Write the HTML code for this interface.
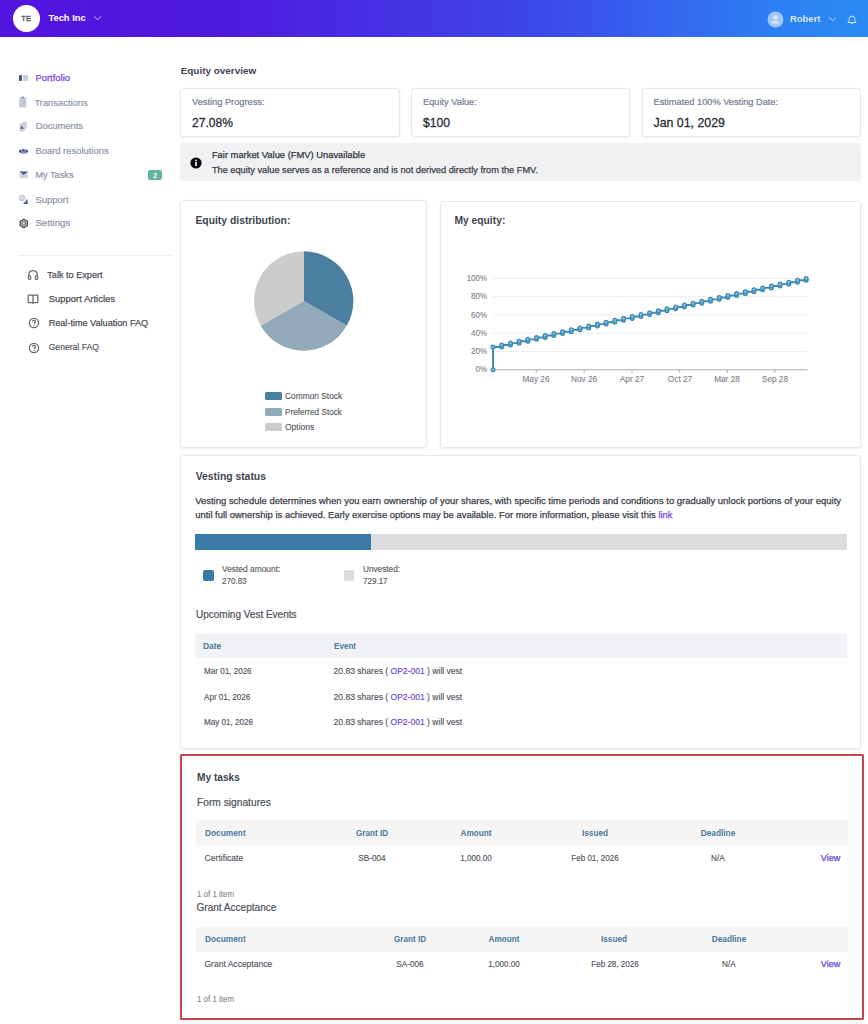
<!DOCTYPE html>
<html><head><meta charset="utf-8"><title>Portfolio</title>
<style>
html,body{margin:0;padding:0;}
body{width:868px;height:1024px;overflow:hidden;position:relative;background:#ffffff;font-family:"Liberation Sans", sans-serif;}
.t{position:absolute;white-space:nowrap;line-height:1;font-family:"Liberation Sans", sans-serif;}
</style></head><body>
<div style="position:absolute;left:0px;top:0px;width:868px;height:37px;background:linear-gradient(90deg,#5214DF 0%,#4F19E0 25%,#3E45E8 60%,#2C80F3 90%,#2A8BF5 100%);"></div>
<div style="position:absolute;left:13px;top:5px;width:26.5px;height:26.5px;background:#fff;border-radius:50%;"></div>
<div class="t" style="left:11.20px;width:30px;text-align:center;top:15.00px;font-size:7.6px;color:#55555f;font-weight:400;-webkit-text-stroke:0.35px #55555f;">TE</div>
<div class="t" style="left:48.40px;top:13.00px;font-size:9.4px;color:#ffffff;font-weight:700;">Tech Inc</div>
<svg style="position:absolute;left:93px;top:15px" width="10" height="7" viewBox="0 0 10 7"><polyline points="1.2,1.3 4.6,4.8 8,1.3" fill="none" stroke="rgba(255,255,255,0.75)" stroke-width="1"/></svg>
<svg style="position:absolute;left:767px;top:10.5px" width="17" height="17" viewBox="0 0 17 17"><circle cx="8.5" cy="8.5" r="8" fill="rgba(255,255,255,0.55)"/><circle cx="8.5" cy="6.4" r="2.3" fill="rgba(255,255,255,0.6)"/><path d="M4.2,12.6 C4.9,10.4 6.6,9.6 8.5,9.6 C10.4,9.6 12.1,10.4 12.8,12.6 Z" fill="rgba(255,255,255,0.6)"/></svg>
<div class="t" style="left:789.90px;top:14.00px;font-size:9.5px;color:rgba(255,255,255,0.82);font-weight:700;">Robert</div>
<svg style="position:absolute;left:827.5px;top:15.5px" width="10" height="7" viewBox="0 0 10 7"><polyline points="1.2,1.3 4.6,4.8 8,1.3" fill="none" stroke="rgba(255,255,255,0.7)" stroke-width="1"/></svg>
<svg style="position:absolute;left:846px;top:13.5px" width="12" height="12" viewBox="0 0 12 12"><path d="M1.9,8.5 C2.9,7.7 3.2,6.7 3.2,5.2 C3.2,3.3 4.4,2.1 6,2.1 C7.6,2.1 8.8,3.3 8.8,5.2 C8.8,6.7 9.1,7.7 10.1,8.5 Z" fill="none" stroke="rgba(255,255,255,0.82)" stroke-width="0.95" stroke-linejoin="round"/><path d="M5,9.3 C5.3,10.1 6.7,10.1 7,9.3" fill="none" stroke="rgba(255,255,255,0.82)" stroke-width="0.9"/></svg>
<div class="t" style="left:35.40px;top:73.00px;font-size:9.46px;color:#7b45e6;font-weight:400;-webkit-text-stroke:0.25px #7b45e6;">Portfolio</div>
<div class="t" style="left:34.40px;top:98.00px;font-size:9.39px;color:#8a92a8;font-weight:400;-webkit-text-stroke:0.18px #8a92a8;">Transactions</div>
<div class="t" style="left:35.70px;top:122.00px;font-size:9.37px;color:#8a92a8;font-weight:400;-webkit-text-stroke:0.18px #8a92a8;">Documents</div>
<div class="t" style="left:35.40px;top:146.00px;font-size:9.41px;color:#8a92a8;font-weight:400;-webkit-text-stroke:0.18px #8a92a8;">Board resolutions</div>
<div class="t" style="left:35.40px;top:171.00px;font-size:9.2px;color:#8a92a8;font-weight:400;-webkit-text-stroke:0.18px #8a92a8;">My Tasks</div>
<div class="t" style="left:35.40px;top:195.00px;font-size:9.48px;color:#8a92a8;font-weight:400;-webkit-text-stroke:0.18px #8a92a8;">Support</div>
<div class="t" style="left:35.40px;top:218.00px;font-size:9.66px;color:#8a92a8;font-weight:400;-webkit-text-stroke:0.18px #8a92a8;">Settings</div>
<div style="position:absolute;left:19px;top:75px;width:2.6000000000000014px;height:6px;background:#41548a;border-radius:1px;"></div>
<div style="position:absolute;left:22.6px;top:75px;width:5.0px;height:6px;background:#c9cedb;border-radius:0.5px;"></div>
<svg style="position:absolute;left:18px;top:96px" width="10" height="12" viewBox="0 0 10 12"><rect x="1" y="1.5" width="7.6" height="10" rx="0.8" fill="#c9cedb"/><rect x="3.3" y="0.6" width="3" height="1.8" rx="0.5" fill="#8e97ad"/><path d="M2.6,5 h4.4 M2.6,7 h4.4 M2.6,9 h3" stroke="#aab2c4" stroke-width="0.6"/></svg>
<svg style="position:absolute;left:18px;top:121px" width="10" height="11" viewBox="0 0 10 11"><rect x="4" y="0.6" width="5" height="7.4" rx="1.2" fill="#d3d7e2"/><rect x="1.6" y="2.6" width="5.2" height="7.6" rx="1" fill="#c9cedb"/><path d="M2.6,5.2 L4.6,5.6 L5.6,8 L2.6,8 Z" fill="#5a6a98"/></svg>
<svg style="position:absolute;left:18px;top:147px" width="11" height="9" viewBox="0 0 11 9"><path d="M1,4.6 C2,7.8 9,7.8 10,4.6 Z" fill="#8e9bbb"/><circle cx="2.4" cy="3.9" r="1.5" fill="#4a5a88"/><circle cx="5.5" cy="3.2" r="1.5" fill="#4a5a88"/><circle cx="8.6" cy="3.9" r="1.5" fill="#4a5a88"/></svg>
<svg style="position:absolute;left:18.5px;top:170px" width="10" height="9" viewBox="0 0 10 9"><rect x="0.6" y="1.6" width="8.2" height="6.4" rx="0.6" fill="#cdd2de"/><path d="M0.6,1.6 L4.7,5 L8.8,1.6 Z" fill="#4a5c8c"/></svg>
<svg style="position:absolute;left:18px;top:193px" width="11" height="11" viewBox="0 0 11 11"><circle cx="4" cy="4.9" r="3.3" fill="#c9cedb"/><circle cx="4.2" cy="4.6" r="1.6" fill="#d8dce6"/><path d="M8.6,5.8 C9.8,6.6 9.9,9.8 9.8,10.9 L5.6,10.9 C5.2,10.6 5.4,10.2 6,9.8 C7.6,8.8 8.4,7.4 8.6,5.8 Z" fill="#4a5c8c"/></svg>
<svg style="position:absolute;left:18.5px;top:218px" width="10" height="11" viewBox="0 0 10 11"><polygon points="4.8,1.2 8.4,3.3 8.4,7.5 4.8,9.6 1.2,7.5 1.2,3.3" fill="#d8d8dc" stroke="#4a4a52" stroke-width="1.3" stroke-linejoin="round"/><polygon points="4.8,3.4 6.6,4.4 6.6,6.4 4.8,7.4 3,6.4 3,4.4" fill="none" stroke="#4a4a52" stroke-width="0.9"/></svg>
<div style="position:absolute;left:148px;top:170px;width:14px;height:10px;background:#5fb3a0;border-radius:2px;"></div>
<div class="t" style="left:148.00px;width:14px;text-align:center;top:172.00px;font-size:7.5px;color:#ffffff;font-weight:700;">2</div>
<div style="position:absolute;left:19px;top:255px;width:153px;height:1px;background:#eceef1;"></div>
<div class="t" style="left:47.30px;top:271.00px;font-size:9.14px;color:#4f5058;font-weight:400;-webkit-text-stroke:0.25px #4f5058;">Talk to Expert</div>
<div class="t" style="left:48.70px;top:294.00px;font-size:9.48px;color:#4f5058;font-weight:400;-webkit-text-stroke:0.25px #4f5058;">Support Articles</div>
<div class="t" style="left:48.70px;top:319.00px;font-size:9.11px;color:#4f5058;font-weight:400;-webkit-text-stroke:0.25px #4f5058;">Real-time Valuation FAQ</div>
<div class="t" style="left:48.70px;top:343.00px;font-size:8.6px;color:#4f5058;font-weight:400;-webkit-text-stroke:0.15px #4f5058;">General FAQ</div>
<svg style="position:absolute;left:27px;top:269px" width="12" height="12" viewBox="0 0 12 12"><path d="M1.8,8 L1.8,6 C1.8,3.4 3.6,1.6 6,1.6 C8.4,1.6 10.2,3.4 10.2,6 L10.2,8" fill="none" stroke="#6a6b71" stroke-width="1.3"/><rect x="1.3" y="6.8" width="2.4" height="3.6" rx="1" fill="none" stroke="#6a6b71" stroke-width="1.2"/><rect x="8.3" y="6.8" width="2.4" height="3.6" rx="1" fill="none" stroke="#6a6b71" stroke-width="1.2"/></svg>
<svg style="position:absolute;left:27px;top:293px" width="12" height="12" viewBox="0 0 12 12"><path d="M1.2,2 L5.4,2 C5.8,2 6,2.3 6,2.6 L6,10.4 C6,10 5.7,9.6 5.2,9.6 L1.2,9.6 Z M10.8,2 L6.6,2 C6.2,2 6,2.3 6,2.6 L6,10.4 C6,10 6.3,9.6 6.8,9.6 L10.8,9.6 Z" fill="none" stroke="#6a6b71" stroke-width="1.25" stroke-linejoin="round"/></svg>
<svg style="position:absolute;left:27.5px;top:317px" width="12" height="12" viewBox="0 0 12 12"><circle cx="6" cy="6" r="4.6" fill="none" stroke="#6a6b71" stroke-width="1.3"/><path d="M4.5,4.8 C4.5,3.9 5.2,3.4 6,3.4 C6.8,3.4 7.5,3.9 7.5,4.7 C7.5,5.6 6.1,5.8 6.1,6.9" fill="none" stroke="#6a6b71" stroke-width="1.2"/><circle cx="6.1" cy="8.4" r="0.55" fill="#6a6b71"/></svg>
<svg style="position:absolute;left:27.5px;top:341.5px" width="12" height="12" viewBox="0 0 12 12"><circle cx="6" cy="6" r="4.6" fill="none" stroke="#6a6b71" stroke-width="1.3"/><path d="M4.5,4.8 C4.5,3.9 5.2,3.4 6,3.4 C6.8,3.4 7.5,3.9 7.5,4.7 C7.5,5.6 6.1,5.8 6.1,6.9" fill="none" stroke="#6a6b71" stroke-width="1.2"/><circle cx="6.1" cy="8.4" r="0.55" fill="#6a6b71"/></svg>
<div class="t" style="left:180.70px;top:66.00px;font-size:9.94px;color:#41454f;font-weight:700;">Equity overview</div>
<div style="position:absolute;left:180px;top:88px;width:219.5px;height:48.5px;background:#fff;border:1px solid #e6e8ec;border-radius:3px;box-shadow:0 1px 3px rgba(30,40,60,0.07);box-sizing:border-box;"></div>
<div class="t" style="left:192.00px;top:98.00px;font-size:9.26px;color:#737b94;font-weight:400;-webkit-text-stroke:0.2px #737b94;">Vesting Progress:</div>
<div class="t" style="left:192.00px;top:117.00px;font-size:12.06px;color:#2a2f3b;font-weight:400;-webkit-text-stroke:0.3px #2a2f3b;">27.08%</div>
<div style="position:absolute;left:411px;top:88px;width:219px;height:48.5px;background:#fff;border:1px solid #e6e8ec;border-radius:3px;box-shadow:0 1px 3px rgba(30,40,60,0.07);box-sizing:border-box;"></div>
<div class="t" style="left:423.00px;top:98.00px;font-size:9.26px;color:#737b94;font-weight:400;-webkit-text-stroke:0.2px #737b94;">Equity Value:</div>
<div class="t" style="left:423.00px;top:117.00px;font-size:12.2px;color:#2a2f3b;font-weight:400;-webkit-text-stroke:0.3px #2a2f3b;">$100</div>
<div style="position:absolute;left:641.5px;top:88px;width:219.5px;height:48.5px;background:#fff;border:1px solid #e6e8ec;border-radius:3px;box-shadow:0 1px 3px rgba(30,40,60,0.07);box-sizing:border-box;"></div>
<div class="t" style="left:653.50px;top:98.00px;font-size:9.22px;color:#737b94;font-weight:400;-webkit-text-stroke:0.2px #737b94;">Estimated 100% Vesting Date:</div>
<div class="t" style="left:653.50px;top:117.00px;font-size:12.36px;color:#2a2f3b;font-weight:400;-webkit-text-stroke:0.3px #2a2f3b;">Jan 01, 2029</div>
<div style="position:absolute;left:180px;top:143.3px;width:681px;height:37.69999999999999px;background:#f0f1f3;border-radius:3px;"></div>
<svg style="position:absolute;left:190px;top:157px" width="12" height="12" viewBox="0 0 12 12"><circle cx="6" cy="6" r="5.6" fill="#0b0b0f"/><rect x="5.2" y="4.8" width="1.6" height="4.2" fill="#fff"/><circle cx="6" cy="3.3" r="0.85" fill="#fff"/></svg>
<div class="t" style="left:211.90px;top:151.00px;font-size:9.37px;color:#333640;font-weight:400;-webkit-text-stroke:0.25px #333640;">Fair market Value (FMV) Unavailable</div>
<div class="t" style="left:211.90px;top:166.00px;font-size:9.22px;color:#3d404a;font-weight:400;-webkit-text-stroke:0.25px #3d404a;">The equity value serves as a reference and is not derived directly from the FMV.</div>
<div style="position:absolute;left:179.6px;top:200.3px;width:247.9px;height:247.7px;background:#fff;border:1px solid #e6e8ec;border-radius:3px;box-shadow:0 1px 3px rgba(30,40,60,0.07);box-sizing:border-box;"></div>
<div class="t" style="left:195.40px;top:216.00px;font-size:10.36px;color:#41454f;font-weight:700;">Equity distribution:</div>
<svg style="position:absolute;left:0;top:0" width="868" height="1024"><path d="M303.7,301 L303.70,251.30 A49.7,49.7 0 0,1 346.74,325.85 Z" fill="#4a7fa1"/><path d="M303.7,301 L346.74,325.85 A49.7,49.7 0 0,1 260.66,325.85 Z" fill="#91a9b8"/><path d="M303.7,301 L260.66,325.85 A49.7,49.7 0 0,1 303.70,251.30 Z" fill="#cccccc"/></svg>
<div style="position:absolute;left:265px;top:391.6px;width:16.5px;height:8.399999999999977px;background:#4a7fa1;border-radius:1.5px;"></div>
<div class="t" style="left:285.00px;top:392.00px;font-size:8.5px;color:#5a5c64;font-weight:400;-webkit-text-stroke:0.15px #5a5c64;transform:scaleX(0.9847);transform-origin:0 0;">Common Stock</div>
<div style="position:absolute;left:265px;top:407.5px;width:16.5px;height:8.399999999999977px;background:#8fa9bd;border-radius:1.5px;"></div>
<div class="t" style="left:285.00px;top:408.00px;font-size:8.5px;color:#5a5c64;font-weight:400;-webkit-text-stroke:0.15px #5a5c64;transform:scaleX(0.9647);transform-origin:0 0;">Preferred Stock</div>
<div style="position:absolute;left:265px;top:423.1px;width:16.5px;height:8.399999999999977px;background:#cccccc;border-radius:1.5px;"></div>
<div class="t" style="left:285.00px;top:423.00px;font-size:8.5px;color:#5a5c64;font-weight:400;-webkit-text-stroke:0.15px #5a5c64;">Options</div>
<div style="position:absolute;left:439.5px;top:200.5px;width:421.5px;height:247.5px;background:#fff;border:1px solid #e6e8ec;border-radius:3px;box-shadow:0 1px 3px rgba(30,40,60,0.07);box-sizing:border-box;"></div>
<div class="t" style="left:454.40px;top:216.00px;font-size:10.31px;color:#41454f;font-weight:700;">My equity:</div>
<svg style="position:absolute;left:0;top:0" width="868" height="1024"><line x1="493" y1="351.52" x2="807.5" y2="351.52" stroke="#e9edf2" stroke-width="1"/><line x1="493" y1="333.24" x2="807.5" y2="333.24" stroke="#e9edf2" stroke-width="1"/><line x1="493" y1="314.96" x2="807.5" y2="314.96" stroke="#e9edf2" stroke-width="1"/><line x1="493" y1="296.68" x2="807.5" y2="296.68" stroke="#e9edf2" stroke-width="1"/><line x1="493" y1="278.40" x2="807.5" y2="278.40" stroke="#e9edf2" stroke-width="1"/><line x1="493" y1="369.8" x2="807.5" y2="369.8" stroke="#a9abb2" stroke-width="1"/><line x1="536.3" y1="369.8" x2="536.3" y2="372.8" stroke="#a9abb2" stroke-width="1"/><line x1="584.2" y1="369.8" x2="584.2" y2="372.8" stroke="#a9abb2" stroke-width="1"/><line x1="632" y1="369.8" x2="632" y2="372.8" stroke="#a9abb2" stroke-width="1"/><line x1="679.7" y1="369.8" x2="679.7" y2="372.8" stroke="#a9abb2" stroke-width="1"/><line x1="727.4" y1="369.8" x2="727.4" y2="372.8" stroke="#a9abb2" stroke-width="1"/><line x1="774.8" y1="369.8" x2="774.8" y2="372.8" stroke="#a9abb2" stroke-width="1"/><path d="M493.00,369.80 L493.00,346.95 L501.70,346.95 L501.70,345.05 L510.40,345.05 L510.40,343.14 L519.10,343.14 L519.10,341.24 L527.80,341.24 L527.80,339.33 L536.50,339.33 L536.50,337.43 L545.20,337.43 L545.20,335.52 L553.90,335.52 L553.90,333.62 L562.60,333.62 L562.60,331.72 L571.30,331.72 L571.30,329.81 L580.00,329.81 L580.00,327.91 L588.70,327.91 L588.70,326.00 L597.40,326.00 L597.40,324.10 L606.10,324.10 L606.10,322.20 L614.80,322.20 L614.80,320.29 L623.50,320.29 L623.50,318.39 L632.20,318.39 L632.20,316.48 L640.90,316.48 L640.90,314.58 L649.60,314.58 L649.60,312.68 L658.30,312.68 L658.30,310.77 L667.00,310.77 L667.00,308.87 L675.70,308.87 L675.70,306.96 L684.40,306.96 L684.40,305.06 L693.10,305.06 L693.10,303.15 L701.80,303.15 L701.80,301.25 L710.50,301.25 L710.50,299.35 L719.20,299.35 L719.20,297.44 L727.90,297.44 L727.90,295.54 L736.60,295.54 L736.60,293.63 L745.30,293.63 L745.30,291.73 L754.00,291.73 L754.00,289.82 L762.70,289.82 L762.70,287.92 L771.40,287.92 L771.40,286.02 L780.10,286.02 L780.10,284.11 L788.80,284.11 L788.80,282.21 L797.50,282.21 L797.50,280.30 L806.20,280.30 L806.20,278.40" fill="none" stroke="#3b8ab4" stroke-width="1.9"/><circle cx="493.00" cy="369.80" r="1.9" fill="#8dbbd6" stroke="#3b8ab4" stroke-width="1.25"/><circle cx="493.00" cy="346.95" r="1.9" fill="#8dbbd6" stroke="#3b8ab4" stroke-width="1.25"/><circle cx="501.70" cy="346.95" r="1.9" fill="#8dbbd6" stroke="#3b8ab4" stroke-width="1.25"/><circle cx="501.70" cy="345.05" r="1.9" fill="#8dbbd6" stroke="#3b8ab4" stroke-width="1.25"/><circle cx="510.40" cy="345.05" r="1.9" fill="#8dbbd6" stroke="#3b8ab4" stroke-width="1.25"/><circle cx="510.40" cy="343.14" r="1.9" fill="#8dbbd6" stroke="#3b8ab4" stroke-width="1.25"/><circle cx="519.10" cy="343.14" r="1.9" fill="#8dbbd6" stroke="#3b8ab4" stroke-width="1.25"/><circle cx="519.10" cy="341.24" r="1.9" fill="#8dbbd6" stroke="#3b8ab4" stroke-width="1.25"/><circle cx="527.80" cy="341.24" r="1.9" fill="#8dbbd6" stroke="#3b8ab4" stroke-width="1.25"/><circle cx="527.80" cy="339.33" r="1.9" fill="#8dbbd6" stroke="#3b8ab4" stroke-width="1.25"/><circle cx="536.50" cy="339.33" r="1.9" fill="#8dbbd6" stroke="#3b8ab4" stroke-width="1.25"/><circle cx="536.50" cy="337.43" r="1.9" fill="#8dbbd6" stroke="#3b8ab4" stroke-width="1.25"/><circle cx="545.20" cy="337.43" r="1.9" fill="#8dbbd6" stroke="#3b8ab4" stroke-width="1.25"/><circle cx="545.20" cy="335.52" r="1.9" fill="#8dbbd6" stroke="#3b8ab4" stroke-width="1.25"/><circle cx="553.90" cy="335.52" r="1.9" fill="#8dbbd6" stroke="#3b8ab4" stroke-width="1.25"/><circle cx="553.90" cy="333.62" r="1.9" fill="#8dbbd6" stroke="#3b8ab4" stroke-width="1.25"/><circle cx="562.60" cy="333.62" r="1.9" fill="#8dbbd6" stroke="#3b8ab4" stroke-width="1.25"/><circle cx="562.60" cy="331.72" r="1.9" fill="#8dbbd6" stroke="#3b8ab4" stroke-width="1.25"/><circle cx="571.30" cy="331.72" r="1.9" fill="#8dbbd6" stroke="#3b8ab4" stroke-width="1.25"/><circle cx="571.30" cy="329.81" r="1.9" fill="#8dbbd6" stroke="#3b8ab4" stroke-width="1.25"/><circle cx="580.00" cy="329.81" r="1.9" fill="#8dbbd6" stroke="#3b8ab4" stroke-width="1.25"/><circle cx="580.00" cy="327.91" r="1.9" fill="#8dbbd6" stroke="#3b8ab4" stroke-width="1.25"/><circle cx="588.70" cy="327.91" r="1.9" fill="#8dbbd6" stroke="#3b8ab4" stroke-width="1.25"/><circle cx="588.70" cy="326.00" r="1.9" fill="#8dbbd6" stroke="#3b8ab4" stroke-width="1.25"/><circle cx="597.40" cy="326.00" r="1.9" fill="#8dbbd6" stroke="#3b8ab4" stroke-width="1.25"/><circle cx="597.40" cy="324.10" r="1.9" fill="#8dbbd6" stroke="#3b8ab4" stroke-width="1.25"/><circle cx="606.10" cy="324.10" r="1.9" fill="#8dbbd6" stroke="#3b8ab4" stroke-width="1.25"/><circle cx="606.10" cy="322.20" r="1.9" fill="#8dbbd6" stroke="#3b8ab4" stroke-width="1.25"/><circle cx="614.80" cy="322.20" r="1.9" fill="#8dbbd6" stroke="#3b8ab4" stroke-width="1.25"/><circle cx="614.80" cy="320.29" r="1.9" fill="#8dbbd6" stroke="#3b8ab4" stroke-width="1.25"/><circle cx="623.50" cy="320.29" r="1.9" fill="#8dbbd6" stroke="#3b8ab4" stroke-width="1.25"/><circle cx="623.50" cy="318.39" r="1.9" fill="#8dbbd6" stroke="#3b8ab4" stroke-width="1.25"/><circle cx="632.20" cy="318.39" r="1.9" fill="#8dbbd6" stroke="#3b8ab4" stroke-width="1.25"/><circle cx="632.20" cy="316.48" r="1.9" fill="#8dbbd6" stroke="#3b8ab4" stroke-width="1.25"/><circle cx="640.90" cy="316.48" r="1.9" fill="#8dbbd6" stroke="#3b8ab4" stroke-width="1.25"/><circle cx="640.90" cy="314.58" r="1.9" fill="#8dbbd6" stroke="#3b8ab4" stroke-width="1.25"/><circle cx="649.60" cy="314.58" r="1.9" fill="#8dbbd6" stroke="#3b8ab4" stroke-width="1.25"/><circle cx="649.60" cy="312.68" r="1.9" fill="#8dbbd6" stroke="#3b8ab4" stroke-width="1.25"/><circle cx="658.30" cy="312.68" r="1.9" fill="#8dbbd6" stroke="#3b8ab4" stroke-width="1.25"/><circle cx="658.30" cy="310.77" r="1.9" fill="#8dbbd6" stroke="#3b8ab4" stroke-width="1.25"/><circle cx="667.00" cy="310.77" r="1.9" fill="#8dbbd6" stroke="#3b8ab4" stroke-width="1.25"/><circle cx="667.00" cy="308.87" r="1.9" fill="#8dbbd6" stroke="#3b8ab4" stroke-width="1.25"/><circle cx="675.70" cy="308.87" r="1.9" fill="#8dbbd6" stroke="#3b8ab4" stroke-width="1.25"/><circle cx="675.70" cy="306.96" r="1.9" fill="#8dbbd6" stroke="#3b8ab4" stroke-width="1.25"/><circle cx="684.40" cy="306.96" r="1.9" fill="#8dbbd6" stroke="#3b8ab4" stroke-width="1.25"/><circle cx="684.40" cy="305.06" r="1.9" fill="#8dbbd6" stroke="#3b8ab4" stroke-width="1.25"/><circle cx="693.10" cy="305.06" r="1.9" fill="#8dbbd6" stroke="#3b8ab4" stroke-width="1.25"/><circle cx="693.10" cy="303.15" r="1.9" fill="#8dbbd6" stroke="#3b8ab4" stroke-width="1.25"/><circle cx="701.80" cy="303.15" r="1.9" fill="#8dbbd6" stroke="#3b8ab4" stroke-width="1.25"/><circle cx="701.80" cy="301.25" r="1.9" fill="#8dbbd6" stroke="#3b8ab4" stroke-width="1.25"/><circle cx="710.50" cy="301.25" r="1.9" fill="#8dbbd6" stroke="#3b8ab4" stroke-width="1.25"/><circle cx="710.50" cy="299.35" r="1.9" fill="#8dbbd6" stroke="#3b8ab4" stroke-width="1.25"/><circle cx="719.20" cy="299.35" r="1.9" fill="#8dbbd6" stroke="#3b8ab4" stroke-width="1.25"/><circle cx="719.20" cy="297.44" r="1.9" fill="#8dbbd6" stroke="#3b8ab4" stroke-width="1.25"/><circle cx="727.90" cy="297.44" r="1.9" fill="#8dbbd6" stroke="#3b8ab4" stroke-width="1.25"/><circle cx="727.90" cy="295.54" r="1.9" fill="#8dbbd6" stroke="#3b8ab4" stroke-width="1.25"/><circle cx="736.60" cy="295.54" r="1.9" fill="#8dbbd6" stroke="#3b8ab4" stroke-width="1.25"/><circle cx="736.60" cy="293.63" r="1.9" fill="#8dbbd6" stroke="#3b8ab4" stroke-width="1.25"/><circle cx="745.30" cy="293.63" r="1.9" fill="#8dbbd6" stroke="#3b8ab4" stroke-width="1.25"/><circle cx="745.30" cy="291.73" r="1.9" fill="#8dbbd6" stroke="#3b8ab4" stroke-width="1.25"/><circle cx="754.00" cy="291.73" r="1.9" fill="#8dbbd6" stroke="#3b8ab4" stroke-width="1.25"/><circle cx="754.00" cy="289.82" r="1.9" fill="#8dbbd6" stroke="#3b8ab4" stroke-width="1.25"/><circle cx="762.70" cy="289.82" r="1.9" fill="#8dbbd6" stroke="#3b8ab4" stroke-width="1.25"/><circle cx="762.70" cy="287.92" r="1.9" fill="#8dbbd6" stroke="#3b8ab4" stroke-width="1.25"/><circle cx="771.40" cy="287.92" r="1.9" fill="#8dbbd6" stroke="#3b8ab4" stroke-width="1.25"/><circle cx="771.40" cy="286.02" r="1.9" fill="#8dbbd6" stroke="#3b8ab4" stroke-width="1.25"/><circle cx="780.10" cy="286.02" r="1.9" fill="#8dbbd6" stroke="#3b8ab4" stroke-width="1.25"/><circle cx="780.10" cy="284.11" r="1.9" fill="#8dbbd6" stroke="#3b8ab4" stroke-width="1.25"/><circle cx="788.80" cy="284.11" r="1.9" fill="#8dbbd6" stroke="#3b8ab4" stroke-width="1.25"/><circle cx="788.80" cy="282.21" r="1.9" fill="#8dbbd6" stroke="#3b8ab4" stroke-width="1.25"/><circle cx="797.50" cy="282.21" r="1.9" fill="#8dbbd6" stroke="#3b8ab4" stroke-width="1.25"/><circle cx="797.50" cy="280.30" r="1.9" fill="#8dbbd6" stroke="#3b8ab4" stroke-width="1.25"/><circle cx="806.20" cy="280.30" r="1.9" fill="#8dbbd6" stroke="#3b8ab4" stroke-width="1.25"/><circle cx="806.20" cy="278.40" r="1.9" fill="#8dbbd6" stroke="#3b8ab4" stroke-width="1.25"/></svg>
<div class="t" style="left:447.30px;width:40px;text-align:right;top:365.00px;font-size:8.5px;color:#7c7e84;font-weight:400;-webkit-text-stroke:0.1px #7c7e84;transform:scaleX(0.9341);transform-origin:100% 0;">0%</div>
<div class="t" style="left:447.30px;width:40px;text-align:right;top:347.00px;font-size:8.5px;color:#7c7e84;font-weight:400;-webkit-text-stroke:0.1px #7c7e84;transform:scaleX(0.9341);transform-origin:100% 0;">20%</div>
<div class="t" style="left:447.30px;width:40px;text-align:right;top:329.00px;font-size:8.5px;color:#7c7e84;font-weight:400;-webkit-text-stroke:0.1px #7c7e84;transform:scaleX(0.9341);transform-origin:100% 0;">40%</div>
<div class="t" style="left:447.30px;width:40px;text-align:right;top:311.00px;font-size:8.5px;color:#7c7e84;font-weight:400;-webkit-text-stroke:0.1px #7c7e84;transform:scaleX(0.9341);transform-origin:100% 0;">60%</div>
<div class="t" style="left:447.30px;width:40px;text-align:right;top:292.00px;font-size:8.5px;color:#7c7e84;font-weight:400;-webkit-text-stroke:0.1px #7c7e84;transform:scaleX(0.9341);transform-origin:100% 0;">80%</div>
<div class="t" style="left:447.30px;width:40px;text-align:right;top:274.00px;font-size:8.5px;color:#7c7e84;font-weight:400;-webkit-text-stroke:0.1px #7c7e84;transform:scaleX(0.9341);transform-origin:100% 0;">100%</div>
<div class="t" style="left:506.30px;width:60px;text-align:center;top:375.00px;font-size:8.5px;color:#7c7e84;font-weight:400;-webkit-text-stroke:0.1px #7c7e84;transform:scaleX(0.9682);transform-origin:50% 0;">May 26</div>
<div class="t" style="left:554.20px;width:60px;text-align:center;top:375.00px;font-size:8.5px;color:#7c7e84;font-weight:400;-webkit-text-stroke:0.1px #7c7e84;transform:scaleX(0.9682);transform-origin:50% 0;">Nov 26</div>
<div class="t" style="left:602.00px;width:60px;text-align:center;top:375.00px;font-size:8.5px;color:#7c7e84;font-weight:400;-webkit-text-stroke:0.1px #7c7e84;transform:scaleX(0.9682);transform-origin:50% 0;">Apr 27</div>
<div class="t" style="left:649.70px;width:60px;text-align:center;top:375.00px;font-size:8.5px;color:#7c7e84;font-weight:400;-webkit-text-stroke:0.1px #7c7e84;transform:scaleX(0.9682);transform-origin:50% 0;">Oct 27</div>
<div class="t" style="left:697.40px;width:60px;text-align:center;top:375.00px;font-size:8.5px;color:#7c7e84;font-weight:400;-webkit-text-stroke:0.1px #7c7e84;transform:scaleX(0.9682);transform-origin:50% 0;">Mar 28</div>
<div class="t" style="left:744.80px;width:60px;text-align:center;top:375.00px;font-size:8.5px;color:#7c7e84;font-weight:400;-webkit-text-stroke:0.1px #7c7e84;transform:scaleX(0.9682);transform-origin:50% 0;">Sep 28</div>
<div style="position:absolute;left:179.6px;top:455.4px;width:681.9px;height:293.80000000000007px;background:#fff;border:1px solid #e6e8ec;border-radius:3px;box-shadow:0 1px 3px rgba(30,40,60,0.07);box-sizing:border-box;"></div>
<div class="t" style="left:195.70px;top:472.00px;font-size:10.37px;color:#41454f;font-weight:700;">Vesting status</div>
<div class="t" style="left:195.20px;top:496.00px;font-size:9.47px;color:#3d404a;font-weight:400;-webkit-text-stroke:0.25px #3d404a;">Vesting schedule determines when you earn ownership of your shares, with specific time periods and conditions to gradually unlock portions of your equity</div>
<div class="t" style="left:195.20px;top:510.00px;font-size:9.45px;color:#3d404a;font-weight:400;-webkit-text-stroke:0.25px #3d404a;">until full ownership is achieved. Early exercise options may be available. For more information, please visit this <span style="color:#7b45e6;-webkit-text-stroke-color:#7b45e6">link</span></div>
<div style="position:absolute;left:195px;top:534px;width:652.2px;height:16px;background:#dcdcdc;"></div>
<div style="position:absolute;left:195px;top:534px;width:176.2px;height:16px;background:#3a7aa6;"></div>
<div style="position:absolute;left:203.2px;top:570px;width:10.800000000000011px;height:11px;background:#3a7aa6;border-radius:2px;"></div>
<div style="position:absolute;left:344px;top:570px;width:10.399999999999977px;height:11px;background:#dcdcdc;border-radius:2px;"></div>
<div class="t" style="left:222.40px;top:565.00px;font-size:8.5px;color:#5a5c64;font-weight:400;-webkit-text-stroke:0.15px #5a5c64;transform:scaleX(0.9871);transform-origin:0 0;">Vested amount:</div>
<div class="t" style="left:222.40px;top:577.00px;font-size:8.5px;color:#5a5c64;font-weight:400;-webkit-text-stroke:0.15px #5a5c64;transform:scaleX(0.9459);transform-origin:0 0;">270.83</div>
<div class="t" style="left:362.90px;top:565.00px;font-size:8.5px;color:#5a5c64;font-weight:400;-webkit-text-stroke:0.15px #5a5c64;transform:scaleX(0.9671);transform-origin:0 0;">Unvested:</div>
<div class="t" style="left:362.90px;top:577.00px;font-size:8.5px;color:#5a5c64;font-weight:400;-webkit-text-stroke:0.15px #5a5c64;transform:scaleX(0.9459);transform-origin:0 0;">729.17</div>
<div class="t" style="left:196.00px;top:610.00px;font-size:9.99px;color:#50535b;font-weight:400;-webkit-text-stroke:0.22px #50535b;">Upcoming Vest Events</div>
<div style="position:absolute;left:195.2px;top:633.5px;width:652.0px;height:24.5px;background:#f0f2f5;"></div>
<div class="t" style="left:203.20px;top:642.00px;font-size:8.5px;color:#4a789b;font-weight:700;transform:scaleX(0.9929);transform-origin:0 0;">Date</div>
<div class="t" style="left:333.50px;top:642.00px;font-size:8.5px;color:#4a789b;font-weight:700;transform:scaleX(0.9506);transform-origin:0 0;">Event</div>
<div class="t" style="left:203.50px;top:667.00px;font-size:8.5px;color:#53555c;font-weight:400;-webkit-text-stroke:0.15px #53555c;transform:scaleX(0.9506);transform-origin:0 0;">Mar 01, 2026</div>
<div class="t" style="left:333.50px;top:667.00px;font-size:8.56px;color:#53555c;font-weight:400;-webkit-text-stroke:0.15px #53555c;">20.83 shares ( <span style="color:#6a3fd6;-webkit-text-stroke-color:#6a3fd6">OP2-001</span> ) will vest</div>
<div class="t" style="left:203.50px;top:693.00px;font-size:8.5px;color:#53555c;font-weight:400;-webkit-text-stroke:0.15px #53555c;transform:scaleX(0.9506);transform-origin:0 0;">Apr 01, 2026</div>
<div class="t" style="left:333.50px;top:693.00px;font-size:8.56px;color:#53555c;font-weight:400;-webkit-text-stroke:0.15px #53555c;">20.83 shares ( <span style="color:#6a3fd6;-webkit-text-stroke-color:#6a3fd6">OP2-001</span> ) will vest</div>
<div class="t" style="left:203.50px;top:718.00px;font-size:8.5px;color:#53555c;font-weight:400;-webkit-text-stroke:0.15px #53555c;transform:scaleX(0.9506);transform-origin:0 0;">May 01, 2026</div>
<div class="t" style="left:333.50px;top:718.00px;font-size:8.56px;color:#53555c;font-weight:400;-webkit-text-stroke:0.15px #53555c;">20.83 shares ( <span style="color:#6a3fd6;-webkit-text-stroke-color:#6a3fd6">OP2-001</span> ) will vest</div>
<div style="position:absolute;left:179.5px;top:753.8px;width:684.2px;height:266.0px;background:#fff;border:2.2px solid #c2444f;border-radius:1.5px;box-sizing:border-box;box-shadow:0 1px 3px rgba(30,40,60,0.06);"></div>
<div class="t" style="left:197.00px;top:773.00px;font-size:10.13px;color:#41454f;font-weight:700;">My tasks</div>
<div class="t" style="left:197.00px;top:798.00px;font-size:10.23px;color:#50535b;font-weight:400;-webkit-text-stroke:0.22px #50535b;">Form signatures</div>
<div style="position:absolute;left:196.3px;top:820.3px;width:651.7px;height:25.200000000000045px;background:#f5f5f6;"></div>
<div class="t" style="left:204.60px;top:829.00px;font-size:8.5px;color:#4a789b;font-weight:700;transform:scaleX(0.9788);transform-origin:0 0;">Document</div>
<div class="t" style="left:332.00px;width:80px;text-align:center;top:829.00px;font-size:8.5px;color:#4a789b;font-weight:700;transform:scaleX(0.9541);transform-origin:50% 0;">Grant ID</div>
<div class="t" style="left:436.00px;width:80px;text-align:center;top:829.00px;font-size:8.5px;color:#4a789b;font-weight:700;transform:scaleX(0.9659);transform-origin:50% 0;">Amount</div>
<div class="t" style="left:555.00px;width:80px;text-align:center;top:829.00px;font-size:8.5px;color:#4a789b;font-weight:700;transform:scaleX(0.9659);transform-origin:50% 0;">Issued</div>
<div class="t" style="left:677.60px;width:80px;text-align:center;top:829.00px;font-size:8.5px;color:#4a789b;font-weight:700;transform:scaleX(0.9765);transform-origin:50% 0;">Deadline</div>
<div class="t" style="left:204.60px;top:854.00px;font-size:8.6px;color:#53555c;font-weight:400;-webkit-text-stroke:0.15px #53555c;">Certificate</div>
<div class="t" style="left:332.00px;width:80px;text-align:center;top:854.00px;font-size:8.5px;color:#53555c;font-weight:400;-webkit-text-stroke:0.15px #53555c;transform:scaleX(0.9647);transform-origin:50% 0;">SB-004</div>
<div class="t" style="left:436.00px;width:80px;text-align:center;top:854.00px;font-size:8.5px;color:#53555c;font-weight:400;-webkit-text-stroke:0.15px #53555c;transform:scaleX(0.9529);transform-origin:50% 0;">1,000.00</div>
<div class="t" style="left:555.00px;width:80px;text-align:center;top:854.00px;font-size:8.5px;color:#53555c;font-weight:400;-webkit-text-stroke:0.15px #53555c;transform:scaleX(0.9447);transform-origin:50% 0;">Feb 01, 2026</div>
<div class="t" style="left:677.60px;width:80px;text-align:center;top:854.00px;font-size:8.5px;color:#53555c;font-weight:400;-webkit-text-stroke:0.15px #53555c;transform:scaleX(0.9741);transform-origin:50% 0;">N/A</div>
<div class="t" style="left:820.80px;top:854.00px;font-size:9.03px;color:#6a3fd6;font-weight:400;-webkit-text-stroke:0.25px #6a3fd6;">View</div>
<div class="t" style="left:196.50px;top:890.00px;font-size:8.5px;color:#8a8c93;font-weight:400;-webkit-text-stroke:0.15px #8a8c93;transform:scaleX(0.9318);transform-origin:0 0;">1 of 1 item</div>
<div class="t" style="left:196.50px;top:903.00px;font-size:10.06px;color:#50535b;font-weight:400;-webkit-text-stroke:0.22px #50535b;">Grant Acceptance</div>
<div style="position:absolute;left:196.3px;top:926.6px;width:651.7px;height:25.399999999999977px;background:#f5f5f6;"></div>
<div class="t" style="left:204.60px;top:935.00px;font-size:8.5px;color:#4a789b;font-weight:700;transform:scaleX(0.9788);transform-origin:0 0;">Document</div>
<div class="t" style="left:370.00px;width:80px;text-align:center;top:935.00px;font-size:8.5px;color:#4a789b;font-weight:700;transform:scaleX(0.9541);transform-origin:50% 0;">Grant ID</div>
<div class="t" style="left:464.30px;width:80px;text-align:center;top:935.00px;font-size:8.5px;color:#4a789b;font-weight:700;transform:scaleX(0.9659);transform-origin:50% 0;">Amount</div>
<div class="t" style="left:574.20px;width:80px;text-align:center;top:935.00px;font-size:8.5px;color:#4a789b;font-weight:700;transform:scaleX(0.9659);transform-origin:50% 0;">Issued</div>
<div class="t" style="left:689.00px;width:80px;text-align:center;top:935.00px;font-size:8.5px;color:#4a789b;font-weight:700;transform:scaleX(0.9765);transform-origin:50% 0;">Deadline</div>
<div class="t" style="left:204.50px;top:960.00px;font-size:8.52px;color:#53555c;font-weight:400;-webkit-text-stroke:0.15px #53555c;">Grant Acceptance</div>
<div class="t" style="left:370.30px;width:80px;text-align:center;top:960.00px;font-size:8.5px;color:#53555c;font-weight:400;-webkit-text-stroke:0.15px #53555c;transform:scaleX(0.9647);transform-origin:50% 0;">SA-006</div>
<div class="t" style="left:463.60px;width:80px;text-align:center;top:960.00px;font-size:8.5px;color:#53555c;font-weight:400;-webkit-text-stroke:0.15px #53555c;transform:scaleX(0.9529);transform-origin:50% 0;">1,000.00</div>
<div class="t" style="left:575.00px;width:80px;text-align:center;top:960.00px;font-size:8.5px;color:#53555c;font-weight:400;-webkit-text-stroke:0.15px #53555c;transform:scaleX(0.9447);transform-origin:50% 0;">Feb 28, 2026</div>
<div class="t" style="left:688.70px;width:80px;text-align:center;top:960.00px;font-size:8.5px;color:#53555c;font-weight:400;-webkit-text-stroke:0.15px #53555c;transform:scaleX(0.9741);transform-origin:50% 0;">N/A</div>
<div class="t" style="left:820.80px;top:960.00px;font-size:9.03px;color:#6a3fd6;font-weight:400;-webkit-text-stroke:0.25px #6a3fd6;">View</div>
<div class="t" style="left:196.50px;top:995.00px;font-size:8.5px;color:#8a8c93;font-weight:400;-webkit-text-stroke:0.15px #8a8c93;transform:scaleX(0.9318);transform-origin:0 0;">1 of 1 item</div>
</body></html>
